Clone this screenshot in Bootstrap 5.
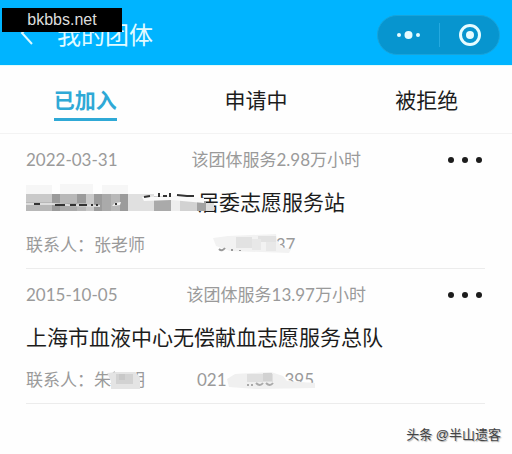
<!DOCTYPE html>
<html lang="zh-CN">
<head>
<meta charset="utf-8">
<meta name="viewport" content="width=device-width, initial-scale=1">
<title>我的团体</title>
<link href="https://cdn.jsdelivr.net/npm/bootstrap@5.3.0/dist/css/bootstrap.min.css" rel="stylesheet">
<style>
body { font-family: Lato, "Noto Sans CJK SC", sans-serif; background: #fefefe; color: #1c1c1c; }
.topbar { background: #00b4ff; height: 65px; padding: 4px 12px 0 20px; }
.back-link { color: #d9f8ff; width: 37px; height: 24px; line-height: 20px; }
.page-title { font-size: 24px; line-height: 32px; color: #e2fbff; }
.capsule { background: #0795cf; border-radius: 20px; height: 40px; width: 123px; border: 1px solid #18a3da; }
.capsule button { color: #e6fcff; line-height: 0; }
.capsule .split { width: 1px; height: 24px; background: #25a9df; }
.site-tag { left: 2px; top: 8px; width: 120px; height: 24px; background: #000; color: #ddd; font: 16px/24px "Liberation Sans", sans-serif; }
.tabs-bar { height: 69px; border-top: 1px solid #e2fbf8; border-bottom: 1px solid #f3f3f3; padding-top: 19px; }
.tab-btn { font-size: 21px; line-height: 29px; height: 36px; border-bottom: 3px solid transparent; display: inline-flex; align-items: flex-start; color: #1c1c1c; }
.tab-btn.active { color: #2fa9d6; font-weight: 700; border-color: #2fa9d6; }
.groups { padding: 0 27px 0 26px; }
.group-item { border-bottom: 1px solid #ececec; padding: 14px 0 11px; }
.meta { font-size: 17px; line-height: 24px; color: #9a9a9a; }
.more-btn { width: 50px; height: 24px; line-height: 0; padding-right: 2px; color: #1c1c1c; }
.group-name { font-size: 21px; line-height: 30px; margin: 15px 0 16px; }
.contact { display: grid; grid-template-columns: 1fr auto 1fr; }
.veil { overflow: visible; flex: none; position: relative; }
.credit { font-family: "Liberation Sans", "Noto Sans CJK SC", sans-serif; font-size: 13px; line-height: 20px; color: #444; padding: 21px 11px 8px 0; text-shadow: 1px 1px 1px #aaa; }
</style>
</head>
<body>
<header class="topbar position-relative d-flex align-items-center">
  <a class="back-link" href="#" aria-label="返回"><svg width="14" height="22" viewBox="0 0 14 22" fill="none" stroke="currentColor" stroke-width="2"><path d="M12 0 2 10l10 11"/></svg></a>
  <h1 class="page-title fw-normal mb-0">我的团体</h1>
  <div class="capsule ms-auto d-flex align-items-center">
    <button class="btn border-0 p-0 flex-fill" type="button" aria-label="更多"><svg width="26" height="10" fill="currentColor"><circle cx="3" cy="5" r="2"/><circle cx="12.5" cy="5" r="4"/><circle cx="22" cy="5" r="2"/></svg></button>
    <span class="split"></span>
    <button class="btn border-0 p-0 flex-fill" type="button" aria-label="关闭"><svg width="24" height="24"><circle cx="12" cy="12" r="9.5" fill="none" stroke="currentColor" stroke-width="3"/><circle cx="12" cy="12" r="4" fill="currentColor"/></svg></button>
  </div>
  <div class="site-tag position-absolute text-center">bkbbs.net</div>
</header>

<nav class="tabs-bar row g-0 text-center">
  <div class="col"><button class="tab-btn btn border-top-0 border-start-0 border-end-0 rounded-0 p-0 active" type="button">已加入</button></div>
  <div class="col"><button class="tab-btn btn border-top-0 border-start-0 border-end-0 rounded-0 p-0" type="button">申请中</button></div>
  <div class="col"><button class="tab-btn btn border-top-0 border-start-0 border-end-0 rounded-0 p-0" type="button">被拒绝</button></div>
</nav>

<main class="groups">
  <article class="group-item">
    <div class="meta d-flex justify-content-between">
      <span>2022-03-31</span><span>该团体服务2.98万小时</span>
      <button class="more-btn btn border-0 py-0 ps-0 text-end" type="button" aria-label="更多操作"><svg width="36" height="8" fill="currentColor"><circle cx="4" cy="4" r="3"/><circle cx="18" cy="4" r="3"/><circle cx="32" cy="4" r="3"/></svg></button>
    </div>
    <h2 class="group-name fw-normal d-flex">
      <svg class="veil z-1" width="172" height="30" viewBox="0 0 172 30" aria-hidden="true">
        <path fill="#f6f6f6" d="M0-2H26V7H0zM34-3H67V7H34zM76-2H102V7H76z"/>
        <path fill="#b8b8b8" d="M0 7H102V24H0z"/>
        <path fill="#c9c9c9" d="M0 7H26V15H0zM60 7H68V24H60z"/>
        <path fill="#9b9b9b" d="M26 7H34V24H26zM51 7H60V16H51zM68 7H76V24H68zM94 7H102V24H94z"/>
        <path fill="#aaa" d="M34 16H51V24H34zM76 7H85V24H76z"/>
        <path fill="#e0e0e0" d="M102 7H128V24H102z"/>
        <path fill="#eee" d="M145 9H154V24H145z"/>
        <path fill="#aaa" d="M128 9H145V24H128z"/>
        <path fill="#d2d2d2" d="M154 11H171V24H154z"/>
        <path fill="#a2a2a2" d="M171 14H180V24H171z"/>
        <path fill="#ddd" d="M180 16H188V24H180z"/>
        <path fill="#fafafa" d="M116 10 145 9 178 11V16L145 13 118 14z"/>
        <path d="M0 17H26L42 18 74 19" fill="none" stroke="#ddd" stroke-width="2"/>
        <path d="M86 19 89 16 95 15 94 18z" fill="#f5f5f5"/>
        <path d="M8 17H14M29 18H39M44 18H50M53 18H61M65 18H67M70 18H72M90 16V18M118 10 124 9M133 6V10M144 6V10M137 9H141M151 8 161 9H168" fill="none" stroke="#333" stroke-width="2"/>
      </svg>
      <span>居委志愿服务站</span>
    </h2>
    <div class="meta contact">
      <span>联系人：张老师</span>
      <span class="d-flex"><svg class="veil z-1" width="60" height="24" viewBox="0 0 60 24" aria-hidden="true">
        <path fill="#f2f2f2" d="M-3 5 12 3 60 1 61 7 65 14 75 16 73 20 14 18 0 13z"/>
        <path fill="#e2e2e2" d="M20 4H36V15H20zM42 3H60V9H42z"/><path fill="#e8e8e8" d="M36 6H45V17H36zM50 9H60V18H50z"/>
        <path d="M3 16Q6 19 9 15M16 16V18M24 17V18" fill="none" stroke="#999" stroke-width="2"/>
      </svg><span>37</span></span>
    </div>
  </article>

  <article class="group-item">
    <div class="meta d-flex justify-content-between">
      <span>2015-10-05</span><span>该团体服务13.97万小时</span>
      <button class="more-btn btn border-0 py-0 ps-0 text-end" type="button" aria-label="更多操作"><svg width="36" height="8" fill="currentColor"><circle cx="4" cy="4" r="3"/><circle cx="18" cy="4" r="3"/><circle cx="32" cy="4" r="3"/></svg></button>
    </div>
    <h2 class="group-name fw-normal">上海市血液中心无偿献血志愿服务总队</h2>
    <div class="meta contact">
      <span class="d-flex"><span>联系人：朱</span><svg class="veil z-1" width="17" height="24" viewBox="0 0 17 24" aria-hidden="true">
        <path d="M1 7 4 4M0 16 4 13" stroke="#999" stroke-width="2"/>
        <path fill="#e4e4e4" d="M-4 5 5 4H24L29 9V21H0V13z"/><path fill="#d2d2d2" d="M5 6H22V16H5z"/><path fill="#c8c8c8" d="M8 6H14V12H8z"/>
      </svg><span>明</span></span>
      <span class="d-flex"><span>021</span><svg class="veil z-1" width="58" height="24" viewBox="0 0 58 24" aria-hidden="true">
        <path fill="#f0f0f0" d="M0 11 8 6 44 4 56 8 60 13 88 15V20L30 21 2 19z"/>
        <path fill="#dfdfdf" d="M20 6H46V14H20z"/><path fill="#d2d2d2" d="M36 5H45V13H36z"/>
        <path d="M20 17H22M25 16V18M29 15Q33 19 36 15M39 15Q43 19 46 15" fill="none" stroke="#aaa" stroke-width="2"/>
      </svg><span>395</span></span>
    </div>
  </article>
</main>
<footer class="credit text-end">头条 @半山遗客</footer>
<script src="https://cdn.jsdelivr.net/npm/bootstrap@5.3.0/dist/js/bootstrap.bundle.min.js"></script>
</body>
</html>
